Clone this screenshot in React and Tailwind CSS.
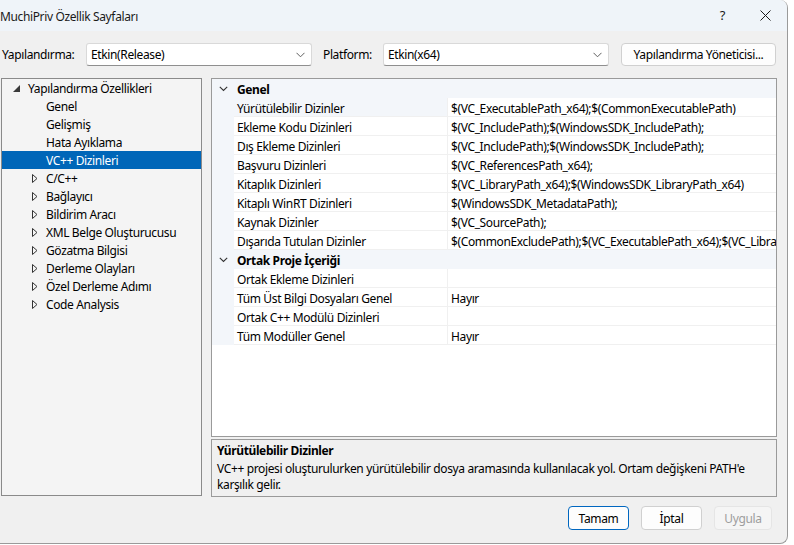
import React from "react";

const treeChildren = [
  { t: "Genel" },
  { t: "Gelişmiş" },
  { t: "Hata Ayıklama" },
  { t: "VC++ Dizinleri", sel: true },
  { t: "C/C++", exp: true },
  { t: "Bağlayıcı", exp: true },
  { t: "Bildirim Aracı", exp: true },
  { t: "XML Belge Oluşturucusu", exp: true },
  { t: "Gözatma Bilgisi", exp: true },
  { t: "Derleme Olayları", exp: true },
  { t: "Özel Derleme Adımı", exp: true },
  { t: "Code Analysis", exp: true },
];

const genel = [
  ["Yürütülebilir Dizinler", "$(VC_ExecutablePath_x64);$(CommonExecutablePath)", true],
  ["Ekleme Kodu Dizinleri", "$(VC_IncludePath);$(WindowsSDK_IncludePath);"],
  ["Dış Ekleme Dizinleri", "$(VC_IncludePath);$(WindowsSDK_IncludePath);"],
  ["Başvuru Dizinleri", "$(VC_ReferencesPath_x64);"],
  ["Kitaplık Dizinleri", "$(VC_LibraryPath_x64);$(WindowsSDK_LibraryPath_x64)"],
  ["Kitaplı WinRT Dizinleri", "$(WindowsSDK_MetadataPath);"],
  ["Kaynak Dizinler", "$(VC_SourcePath);"],
  ["Dışarıda Tutulan Dizinler", "$(CommonExcludePath);$(VC_ExecutablePath_x64);$(VC_LibraryPath_x64)"],
];

const ortak = [
  ["Ortak Ekleme Dizinleri", ""],
  ["Tüm Üst Bilgi Dosyaları Genel", "Hayır"],
  ["Ortak C++ Modülü Dizinleri", ""],
  ["Tüm Modüller Genel", "Hayır"],
];

function Chevron({ className }) {
  return (
    <svg width="9" height="6" viewBox="0 0 9 6" className={className}>
      <polyline points="0.5,0.8 4.5,4.8 8.5,0.8" fill="none" stroke="#606060" strokeWidth="1" />
    </svg>
  );
}

function Combo({ text, width }) {
  return (
    <div
      className="h-[23px] bg-white border border-[#d9d9d9] border-b-[#8f8f8f] rounded-[3px] flex items-center pl-[4px] pr-[6px]"
      style={{ width }}
    >
      <span className="flex-1 pt-[1px]">{text}</span>
      <Chevron />
    </div>
  );
}

function Header({ title }) {
  return (
    <div className="flex h-[19px] bg-[#f3f6fa] items-center">
      <div className="w-[22px] flex justify-center pl-[1px]">
        <svg width="9" height="6" viewBox="0 0 9 6">
          <polyline points="0.8,0.8 4.5,4.5 8.2,0.8" fill="none" stroke="#333" strokeWidth="1.1" />
        </svg>
      </div>
      <span className="pl-[3px] pt-[2px] font-bold">{title}</span>
    </div>
  );
}

function Row({ name, value, sel }) {
  return (
    <div className="flex h-[19px]">
      <div className="w-[22px] bg-[#f3f6fa] shrink-0" />
      <div
        className={
          "w-[214px] shrink-0 border-b border-r border-[#f0f0f0] pl-[3px] leading-[21px] whitespace-nowrap overflow-hidden " +
          (sel ? "bg-[#f3f6fa]" : "bg-white")
        }
      >
        {name}
      </div>
      <div className="flex-1 min-w-0 border-b border-[#f0f0f0] pl-[3px] leading-[21px] whitespace-nowrap overflow-hidden bg-white">
        {value}
      </div>
    </div>
  );
}

export default function App() {
  return (
    <div className="w-[794px] h-[545px] bg-white overflow-hidden font-['Noto_Sans',sans-serif] text-[12px] tracking-[-0.37px] text-black">
      <div className="w-[788px] h-[544px] bg-[#f0f0f0] border-r border-b border-[#9a9a9a] rounded-br-[8px] rounded-tr-[8px] flex flex-col overflow-hidden">
        {/* title bar */}
        <div className="h-[31px] bg-[#eff4f9] flex items-center shrink-0">
          <span className="pt-[2px] text-[12px] text-[#1a1a1a]">MuchiPriv Özellik Sayfaları</span>
          <div className="flex-1" />
          <span className="text-[13px] mr-[35px] text-[#1a1a1a]">?</span>
          <svg width="11" height="11" viewBox="0 0 11 11" className="mr-[16px]">
            <path d="M0.5 0.5 L10.5 10.5 M10.5 0.5 L0.5 10.5" stroke="#1a1a1a" strokeWidth="1" />
          </svg>
        </div>

        {/* config row */}
        <div className="flex items-center mt-[12px] h-[23px] shrink-0">
          <span className="pl-[2px] w-[86px] pt-[1px]">Yapılandırma:</span>
          <Combo text="Etkin(Release)" width={226} />
          <span className="ml-[11px] w-[60px] pt-[1px]">Platform:</span>
          <Combo text="Etkin(x64)" width={226} />
          <div className="ml-[12px] w-[155px] h-[23px] bg-[#fdfdfd] border border-[#d0d0d0] rounded-[4px] flex items-center justify-center pt-[1px]">
            Yapılandırma Yöneticisi...
          </div>
        </div>

        {/* main */}
        <div className="flex mt-[12px] shrink-0">
          {/* tree */}
          <div className="ml-[1px] w-[201px] h-[418px] border border-[#8a8a8a] bg-[#f4f4f4] flex flex-col">
            <div className="h-[18px] flex items-center">
              <svg width="7" height="7" viewBox="0 0 7 7" className="ml-[11px] mr-[8px]">
                <polygon points="7,0 7,7 0,7" fill="#3a3a3a" />
              </svg>
              <span className="pt-[2px]">Yapılandırma Özellikleri</span>
            </div>
            {treeChildren.map((c) => (
              <div
                key={c.t}
                className={"h-[18px] flex items-center " + (c.sel ? "bg-[#0066b8] text-white" : "")}
              >
                <div className="w-[44px] flex justify-end pr-[8px]">
                  {c.exp && (
                    <svg width="6" height="9" viewBox="0 0 6 9">
                      <polygon points="0.5,0.5 5,4.5 0.5,8.5" fill="none" stroke="#333" strokeWidth="1" />
                    </svg>
                  )}
                </div>
                <span className="pt-[2px]">{c.t}</span>
              </div>
            ))}
          </div>

          {/* right */}
          <div className="ml-[9px] w-[566px] flex flex-col">
            <div className="h-[359px] border border-[#9a9a9a] bg-white flex flex-col overflow-hidden">
              <Header title="Genel" />
              {genel.map(([n, v, s]) => (
                <Row key={n} name={n} value={v} sel={s} />
              ))}
              <Header title="Ortak Proje İçeriği" />
              {ortak.map(([n, v]) => (
                <Row key={n} name={n} value={v} />
              ))}
            </div>
            <div className="mt-[2px] h-[58px] border border-[#9a9a9a] bg-[#f0f0f0] px-[5px] pt-[3px] leading-[16px]">
              <div className="font-bold">Yürütülebilir Dizinler</div>
              <div className="mt-[2px]">
                VC++ projesi oluşturulurken yürütülebilir dosya aramasında kullanılacak yol. Ortam değişkeni PATH'e karşılık gelir.
              </div>
            </div>
          </div>
        </div>

        {/* buttons */}
        <div className="flex justify-end mt-[9px] pr-[15px] gap-[12px] shrink-0">
          <div className="w-[61px] h-[24px] bg-[#fdfdfd] border border-[#0067c0] rounded-[4px] flex items-center justify-center pt-[1px]">
            Tamam
          </div>
          <div className="w-[61px] h-[24px] bg-[#fdfdfd] border border-[#d0d0d0] rounded-[4px] flex items-center justify-center pt-[1px]">
            İptal
          </div>
          <div className="w-[58px] h-[24px] bg-[#f5f5f5] border border-[#e5e5e5] rounded-[4px] flex items-center justify-center text-[#9d9d9d] pt-[1px]">
            Uygula
          </div>
        </div>
      </div>
    </div>
  );
}
